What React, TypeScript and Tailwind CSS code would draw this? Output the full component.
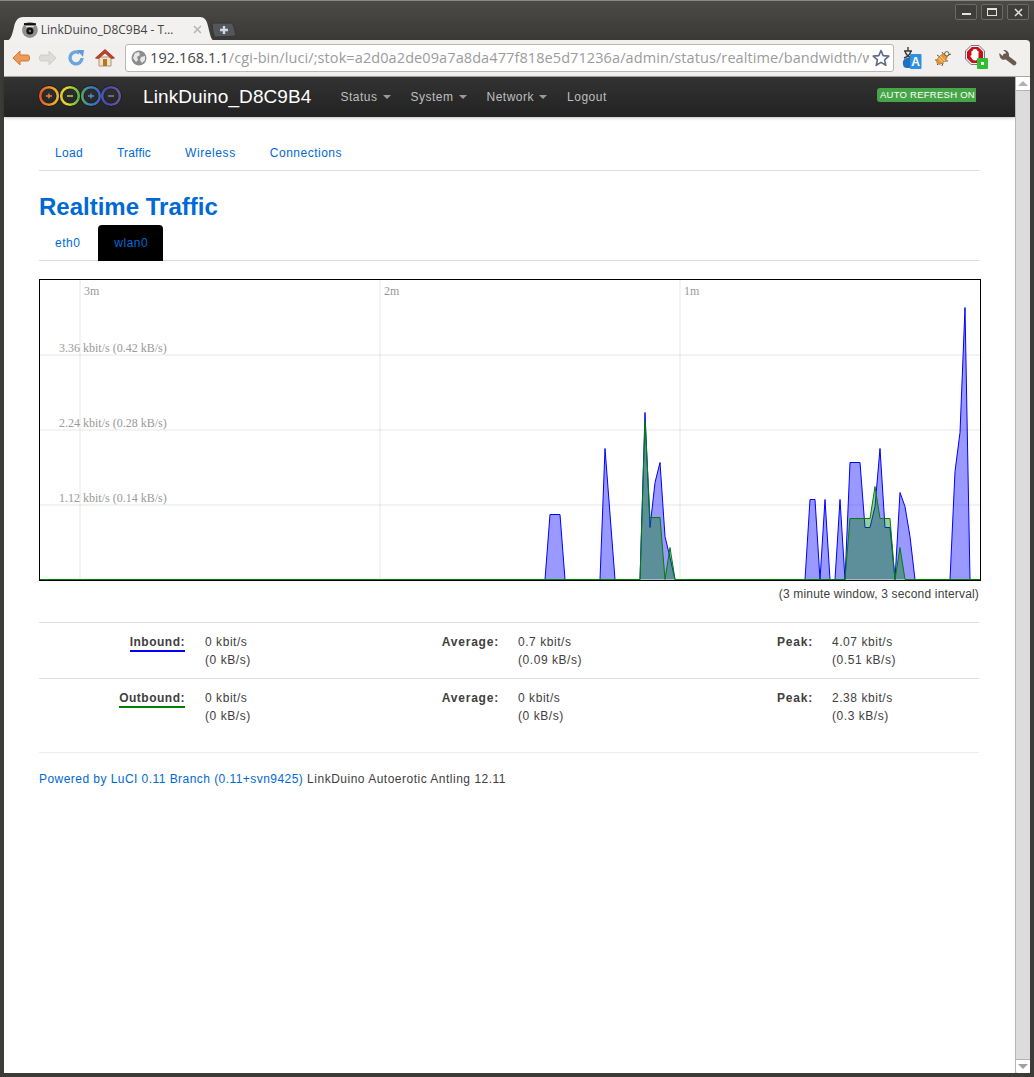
import React from "react";

const sans = "font-['Liberation_Sans',Arial,sans-serif]";

const blueData =
    "0,580 545,580 550,515 560,515 565,580 600,580 605,449 615,580 640,580 645,413 650,528 655,483 660,463 665,537 670,558 675,580 805,580 810,500 815,500 820,580 825,500 830,580 835,580 840,500 845,580 850,463 860,463 865,528 870,528 875,507 880,449 885,528 890,528 895,580 900,493 905,507 910,537 915,580 950,580 955,472 960,433 965,308 970,580 980,580";
const greenData =
    "0,580 640,580 645,421 650,518 660,518 665,580 670,548 675,580 845,580 850,519 870,519 875,487 880,519 890,519 895,580 900,548 905,580 980,580";

const WindowButton = ({ children }: { children: React.ReactNode }) => (
    <div className="w-[22px] h-[16px] border border-[#6b6a65] rounded-[2px] bg-[#3f3e3a] flex items-center justify-center">
        {children}
    </div>
);

const TitleBar = () => (
    <div className="relative h-[40px] shrink-0 bg-gradient-to-b from-[#4b4a46] to-[#3a3935] border-t border-[#8a8985]">
        <div className="absolute left-[4px] top-[16px] w-[210px] h-[25px] pl-[17px] pr-[12px] flex items-center">
            <svg className="absolute left-0 top-0" width="210" height="25" viewBox="0 0 210 25">
                <path d="M0 25 C7 24 8 18 10 10 C11 4 14 0 19 0 L196 0 C201 0 203 4 204 9 C206 17 207 23 210 24 L210 25 Z" fill="#f2f1f0" />
            </svg>
            <svg className="relative" width="18" height="18" viewBox="0 0 18 18">
                <circle cx="9" cy="9" r="8" fill="#8f8f8f" />
                <rect x="3" y="2" width="12" height="2" fill="#111" />
                <rect x="5" y="5" width="8" height="1" fill="#eee" />
                <circle cx="9" cy="10" r="3.6" fill="#111" />
                <circle cx="9" cy="10" r="1.2" fill="#777" />
            </svg>
            <span className="relative ml-[2px] w-[150px] font-['Open_Sans',sans-serif] text-[12px] tracking-normal text-[#444] whitespace-nowrap">
                LinkDuino_D8C9B4 - T…
            </span>
            <svg className="relative ml-[4px]" width="9" height="9" viewBox="0 0 9 9">
                <path d="M1 1 L8 8 M8 1 L1 8" stroke="#b4b4b4" strokeWidth="1.6" />
            </svg>
        </div>
        <svg className="absolute left-[211px] top-[21px]" width="26" height="16" viewBox="0 0 26 16">
            <path d="M1 1 L19 1 C21 1 22 2 23 5 L25 14 L5 15 C3 15 3 13 2 10 Z" fill="#55565a" stroke="#35353a" />
            <path d="M13 4 V12 M9 8 H17" stroke="#cfd8e6" strokeWidth="2.4" />
        </svg>
        <div className="absolute right-[5px] top-[3px] flex gap-[4px]">
            <WindowButton>
                <div className="w-[9px] h-[2px] bg-[#e4e3df] mt-[3px]" />
            </WindowButton>
            <WindowButton>
                <div className="w-[10px] h-[8px] border border-[#e4e3df] border-t-2" />
            </WindowButton>
            <WindowButton>
                <svg width="9" height="9" viewBox="0 0 9 9">
                    <path d="M1 1 L8 8 M8 1 L1 8" stroke="#e4e3df" strokeWidth="1.5" />
                </svg>
            </WindowButton>
        </div>
    </div>
);

const NavIcons = () => (
    <div className="flex items-center">
        <svg className="ml-[7px]" width="20" height="18" viewBox="0 0 20 18">
            <path d="M9 2 L2 9 L9 16 V12 H17 C19 12 19 6 17 6 H9 Z" fill="#ec9a5c" stroke="#d9742c" strokeLinejoin="round" />
        </svg>
        <svg className="ml-[7px]" width="20" height="18" viewBox="0 0 20 18">
            <path d="M11 2 L18 9 L11 16 V12 H3 C1 12 1 6 3 6 H11 Z" fill="#dcdbd8" stroke="#cfcecb" strokeLinejoin="round" />
        </svg>
        <svg className="ml-[9px]" width="18" height="18" viewBox="0 0 18 18">
            <path d="M15 9 A6 6 0 1 1 12.5 4" fill="none" stroke="#6aa6dc" strokeWidth="3.4" />
            <path d="M10 1 L17 1 L16 8 Z" fill="#5d9bd5" />
        </svg>
        <svg className="ml-[10px]" width="20" height="20" viewBox="0 0 20 20">
            <path d="M4 9 V18 H16 V9 Z" fill="#efe3c2" stroke="#a89a78" />
            <rect x="8" y="11" width="4" height="7" fill="#b5762c" />
            <path d="M0.5 10 L10 1.5 L19.5 10 L16.5 10.5 L10 5 L3.5 10.5 Z" fill="#c8402e" stroke="#a02a1e" strokeWidth="0.8" />
        </svg>
    </div>
);

const UrlBar = () => (
    <div className="ml-[10px] w-[769px] h-[28px] bg-white border border-[#b8b7b4] rounded-[3px] flex items-center pl-[5px] pr-[2px]">
        <svg className="shrink-0" width="16" height="16" viewBox="0 0 16 16">
            <circle cx="8" cy="8" r="7.5" fill="#8d8d8d" />
            <path d="M4 3 L8 2 L9 5 L6 7 L7 10 L5 12 L2 8 Z M10 7 L14 6 L14 10 L11 13 L9 10 Z" fill="#e8e8e8" />
        </svg>
        <div className="ml-[3px] w-[719px] overflow-hidden whitespace-nowrap font-['Open_Sans',sans-serif] text-[14.5px] tracking-[0.09px] text-[#9b9b9b]">
            <span className="text-[#444]">192.168.1.1</span>/cgi-bin/luci/;stok=a2d0a2de09a7a8da477f818e5d71236a/admin/status/realtime/bandwidth/wlan0
        </div>
        <svg className="shrink-0 ml-[3px]" width="18" height="18" viewBox="0 0 18 18">
            <path d="M9 1.5 L11.2 6.6 L16.8 7.1 L12.6 10.8 L13.8 16.3 L9 13.4 L4.2 16.3 L5.4 10.8 L1.2 7.1 L6.8 6.6 Z" fill="#fff" stroke="#5b6b85" strokeWidth="1.6" strokeLinejoin="round" />
        </svg>
    </div>
);

const ExtensionIcons = () => (
    <div className="flex items-center ml-[8px]">
        <svg width="20" height="24" viewBox="0 0 20 24">
            <path d="M6 1 V5 M2 5 H10 M3 5 C4 9 7 11 9 12 M9 5 C8 9 5 11 2 12" stroke="#3a3a3a" strokeWidth="1.4" fill="none" />
            <path d="M1 18 C0 14 4 11 8 12 L8 22 L5 22 C3 22 1 21 1 18 Z" fill="#1f6fc0" />
            <rect x="8" y="8" width="11.5" height="15" rx="1" fill="#2f8fe0" />
            <text x="9.3" y="20" fill="#fff" fontSize="12" fontWeight="700" fontFamily="Liberation Sans, sans-serif" letterSpacing="0">A</text>
        </svg>
        <svg className="ml-[12px]" width="18" height="18" viewBox="0 0 18 18">
            <path d="M12 7 L17 5 M8 3 L10 6 M3 6 L6 8 M1 11 L5 11 M3 16 L6 13 M8 17 L9 14 M14 12 L11 12" stroke="#5a4020" strokeWidth="0.9" />
            <ellipse cx="8" cy="10" rx="3.6" ry="6.5" transform="rotate(45 8 10)" fill="#e8973a" stroke="#a8662a" strokeWidth="0.7" />
            <path d="M6 7 L11 12 M4.5 9 L9 13.5" stroke="#f6d9a0" strokeWidth="0.9" />
            <circle cx="12.8" cy="4.8" r="2.2" fill="#f4f0e0" stroke="#4a3a20" strokeWidth="0.8" />
        </svg>
        <div className="relative ml-[13px] w-[24px] h-[26px]">
            <svg width="20" height="20" viewBox="0 0 20 20">
                <path d="M6 0.5 H14 L19.5 6 V14 L14 19.5 H6 L0.5 14 V6 Z" fill="#f4f4f4" stroke="#777" strokeWidth="1" />
                <path d="M6.8 2 H13.2 L18 6.8 V13.2 L13.2 18 H6.8 L2 13.2 V6.8 Z" fill="#c8101a" />
                <path d="M6.5 10 V6 H7.8 V4.6 H9.2 V4 H10.8 V4.6 H12.2 V6 H13.5 V12 C13.5 14 12.5 15.5 10.2 15.5 C8.5 15.5 7.6 14.5 6.8 13.2 L5.2 11 L6.5 10 Z" fill="#fff" />
            </svg>
            <div className="absolute left-[12px] top-[13px] w-[11px] h-[11px] bg-[#2fbf2f] rounded-[1px] flex items-center justify-center">
                <div className="w-[3px] h-[3px] bg-white" />
            </div>
        </div>
        <svg className="ml-[10px]" width="18" height="16" viewBox="0 0 18 16">
            <path d="M6 6 L15 13" stroke="#6a5a50" strokeWidth="4.6" strokeLinecap="round" />
            <path d="M0.5 3 L3.5 6 L6 5 L7 2.5 L4 0 C7 -0.5 10.5 2 10 5.5 C9.5 8.5 6 10.5 3 9.5 C1 8.5 0 5.5 0.5 3 Z" fill="#6a5a50" />
        </svg>
    </div>
);

const Toolbar = () => (
    <div className="h-[37px] shrink-0 mx-[4px] bg-[#f1f0ee] border-b border-[#a8a7a4] rounded-tr-[4px] flex items-center">
        <NavIcons />
        <UrlBar />
        <ExtensionIcons />
    </div>
);

const Logo = () => (
    <svg width="86" height="24" viewBox="0 0 86 24">
        <defs>
            <linearGradient id="logoGrad" gradientUnits="userSpaceOnUse" x1="1" x2="85" y1="0" y2="0">
                <stop offset="0" stopColor="#e0502a" />
                <stop offset="0.16" stopColor="#f0a028" />
                <stop offset="0.34" stopColor="#dcdc30" />
                <stop offset="0.48" stopColor="#58b050" />
                <stop offset="0.64" stopColor="#3a78c8" />
                <stop offset="0.8" stopColor="#4a4aa0" />
                <stop offset="1" stopColor="#6a5a9a" />
            </linearGradient>
        </defs>
        <g fill="none">
            {[11, 32, 53, 73].map((cx) => (
                <circle key={cx} cx={cx} cy="11" r="8.8" stroke="#000" strokeOpacity="0.5" strokeWidth="3.8" />
            ))}
            {[11, 32, 53, 73].map((cx) => (
                <circle key={cx} cx={cx} cy="11" r="8.8" stroke="url(#logoGrad)" strokeWidth="2.6" />
            ))}
        </g>
        <path d="M8 11 H14 M11 8.5 V13.5" stroke="#e08a30" strokeWidth="1.4" />
        <path d="M29 11 H35" stroke="#b8dc70" strokeWidth="1.4" />
        <path d="M50 11 H56 M53 8.5 V13.5" stroke="#5a8ad0" strokeWidth="1.4" />
        <path d="M70 11 H76" stroke="#8a80b8" strokeWidth="1.4" />
    </svg>
);

const Caret = () => (
    <span className="inline-block ml-[5px] mb-[2px] w-0 h-0 border-x-[4px] border-x-transparent border-t-[4px] border-t-[#9a9a9a]" />
);

const Navbar = () => (
    <div className="h-[40px] shrink-0 bg-gradient-to-b from-[#333] to-[#222] flex items-center pl-[34px] pr-[39px] shadow-[0_1px_3px_rgba(0,0,0,0.25)]">
        <Logo />
        <span className="ml-[19px] text-[19px] tracking-[0.1px] text-white whitespace-nowrap">LinkDuino_D8C9B4</span>
        <div className="ml-[29px] flex gap-[20px] text-[#bfbfbf]">
            <span>Status<Caret /></span>
            <span>System<Caret /></span>
            <span>Network<Caret /></span>
            <span>Logout</span>
        </div>
        <div className="ml-auto mb-[4px] h-[14px] w-[99px] pl-[3px] bg-[#46a546] rounded-l-[3px] text-[9.5px] leading-[14px] tracking-[0.25px] text-white whitespace-nowrap">
            AUTO REFRESH ON
        </div>
    </div>
);

const topTabs = [
    { label: "Load", tracking: "tracking-[0.3px]" },
    { label: "Traffic", tracking: "tracking-[0.2px]" },
    { label: "Wireless", tracking: "tracking-[0.6px]" },
    { label: "Connections", tracking: "tracking-[0.5px]" },
];

const TopTabs = () => (
    <div className="h-[36px] mt-[18px] flex border-b border-[#ddd] items-center text-[#0069d6]">
        {topTabs.map((t) => (
            <span key={t.label} className={"px-[16px] mr-[2px] " + t.tracking}>{t.label}</span>
        ))}
    </div>
);

const SubTabs = () => (
    <div className="h-[36px] flex border-b border-[#ddd] text-[#0069d6]">
        <span className="px-[16px] mr-[2px] leading-[36px]">eth0</span>
        <span className="pl-[16px] pr-[15px] h-[36px] leading-[36px] bg-black rounded-t-[4px]">wlan0</span>
    </div>
);

const Chart = () => (
    <div className="mt-[18px] w-[942px] h-[302px] border border-black">
        <svg width="940" height="300" viewBox="40 280 940 300" className="block tracking-normal">
            <g stroke="#000" strokeWidth="0.1">
                <line x1="80" y1="280" x2="80" y2="580" />
                <line x1="380" y1="280" x2="380" y2="580" />
                <line x1="680" y1="280" x2="680" y2="580" />
                <line x1="40" y1="355" x2="980" y2="355" />
                <line x1="40" y1="430" x2="980" y2="430" />
                <line x1="40" y1="505" x2="980" y2="505" />
            </g>
            <g fill="#999" fontSize="12" fontFamily="Liberation Serif, serif">
                <text x="84" y="295">3m</text>
                <text x="384" y="295">2m</text>
                <text x="684" y="295">1m</text>
                <text x="59" y="352">3.36 kbit/s (0.42 kB/s)</text>
                <text x="59" y="427">2.24 kbit/s (0.28 kB/s)</text>
                <text x="59" y="502">1.12 kbit/s (0.14 kB/s)</text>
            </g>
            <g transform="translate(0 -0.5)">
                <polyline points={blueData} fill="#0000ff" fillOpacity="0.4" stroke="#0000ff" strokeWidth="1" />
                <polyline points={greenData} fill="#008000" fillOpacity="0.4" stroke="#008000" strokeWidth="1" />
            </g>
        </svg>
    </div>
);

type StatRowProps = {
    name: string;
    underline: string;
    current: string[];
    average: string[];
    peak: string[];
};

const Stat = ({ lines }: { lines: string[] }) => (
    <div className="tracking-[0.55px]">
        <div>{lines[0]}</div>
        <div>{lines[1]}</div>
    </div>
);

const StatRow = ({ name, underline, current, average, peak }: StatRowProps) => (
    <div className="h-[56px] pt-[10px] border-t border-[#ddd] grid grid-cols-[166px_150px_163px_151px_163px_1fr] leading-[18px]">
        <div className="text-right pr-[20px] font-bold">
            <span className={"inline-block leading-[16px] border-b-2 " + underline}>{name}:</span>
        </div>
        <Stat lines={current} />
        <div className="text-right pr-[19px] font-bold tracking-[0.8px]">Average:</div>
        <Stat lines={average} />
        <div className="text-right pr-[19px] font-bold tracking-[0.8px]">Peak:</div>
        <Stat lines={peak} />
    </div>
);

const Scrollbar = () => (
    <div className="w-[15px] shrink-0 bg-[#dcdcdc] border-l border-[#b5b5b5] flex flex-col justify-between">
        <div className="h-[14px] bg-white border-b border-[#b5b5b5] flex items-center justify-center">
            <div className="w-0 h-0 border-x-[5px] border-x-transparent border-b-[5px] border-b-[#b0b0b0]" />
        </div>
        <div className="h-[14px] bg-white border-t border-[#b5b5b5] rounded-b-[3px] flex items-center justify-center">
            <div className="w-0 h-0 border-x-[5px] border-x-transparent border-t-[5px] border-t-[#a0a0a0]" />
        </div>
    </div>
);

const App = () => {
    return (
        <div className={"w-[1034px] h-[1077px] flex flex-col bg-[#3c3b37] overflow-hidden text-[12px] text-[#404040] tracking-[0.5px] " + sans}>
            <TitleBar />
            <Toolbar />
            <div className="flex flex-1 min-h-0 ml-[4px] mr-[4px] mb-[4px]">
                <div className="flex-1 min-w-0 bg-white flex flex-col">
                    <Navbar />
                    <div className="pl-[35px] pr-[36px]">
                        <TopTabs />
                        <h1 className="mt-[20px] h-[34px] text-[24px] leading-[32px] font-bold tracking-normal text-[#0069d6]">Realtime Traffic</h1>
                        <SubTabs />
                        <Chart />
                        <div className="mt-[4px] h-[18px] leading-[18px] text-right tracking-[0.17px]">(3 minute window, 3 second interval)</div>
                        <div className="mt-[19px]">
                            <StatRow name="Inbound" underline="border-[#0000ff]" current={["0 kbit/s", "(0 kB/s)"]} average={["0.7 kbit/s", "(0.09 kB/s)"]} peak={["4.07 kbit/s", "(0.51 kB/s)"]} />
                            <StatRow name="Outbound" underline="border-[#008000]" current={["0 kbit/s", "(0 kB/s)"]} average={["0 kbit/s", "(0 kB/s)"]} peak={["2.38 kbit/s", "(0.3 kB/s)"]} />
                        </div>
                        <div className="mt-[18px] pt-[17px] border-t border-[#eee] leading-[18px]">
                            <span className="text-[#0069d6] tracking-[0.45px]">Powered by LuCI 0.11 Branch (0.11+svn9425)</span> LinkDuino Autoerotic Antling 12.11
                        </div>
                    </div>
                </div>
                <Scrollbar />
            </div>
        </div>
    );
};

export default App;
